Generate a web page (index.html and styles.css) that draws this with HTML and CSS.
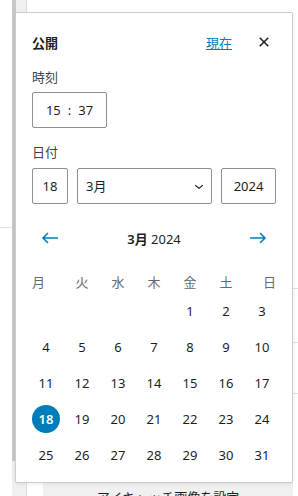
FILE: index.html
```html
<!DOCTYPE html>
<html lang="ja">
<head>
    <meta charset="UTF-8">
    <meta name="viewport" content="width=device-width, initial-scale=1.0">
    <title>公開</title>
    <link rel="stylesheet" href="styles.css">
</head>
<body>
    <div class="page">
        <div class="gutter"><div class="gutter-top"></div></div>
        <div class="scrollbar"><div class="scrollbar-thumb"></div></div>
        <div class="rail"></div>
        <div class="content">
            <div class="panel-row first"></div>
            <div class="panel-row second"></div>
            <div class="panel-row third"></div>
            <div class="spacer"></div>
            <div class="featured">
                <div class="featured-btn">アイキャッチ画像を設定</div>
            </div>
        </div>
    </div>

    <div class="popover">
        <div class="pop-header">
            <span class="pop-title">公開</span>
            <a class="now-link" href="#">現在</a>
            <span class="close-btn">
                <svg width="24" height="24" viewBox="0 0 24 24"><path d="M12 13.06l3.712 3.713 1.061-1.06L13.061 12l3.712-3.712-1.06-1.06L12 10.938 8.288 7.227l-1.061 1.06L10.939 12l-3.712 3.712 1.06 1.061L12 13.061z" fill="#1e1e1e"/></svg>
            </span>
        </div>

        <div class="field-label">時刻</div>
        <div class="time-box">
            <span>15</span><span class="colon">:</span><span>37</span>
        </div>

        <div class="field-label date-label">日付</div>
        <div class="date-row">
            <div class="input day-input">18</div>
            <div class="input month-input">
                <span>3月</span>
                <svg width="18" height="18" viewBox="0 0 24 24"><path d="M17.5 11.6L12 16l-5.5-4.4.9-1.2L12 14l4.6-3.6 1 1.2z" fill="#1e1e1e"/></svg>
            </div>
            <div class="input year-input">2024</div>
        </div>

        <div class="cal-nav">
            <span class="nav-btn">
                <svg width="24" height="24" viewBox="0 0 24 24"><path d="M20 11.2H6.8l3.7-3.7-1-1L3.9 12l5.6 5.5 1-1-3.7-3.7H20z" fill="#007cba"/></svg>
            </span>
            <span class="cal-title"><b>3月</b> 2024</span>
            <span class="nav-btn">
                <svg width="24" height="24" viewBox="0 0 24 24"><path d="M4 11.2h13.2l-3.7-3.7 1-1L20.1 12l-5.6 5.5-1-1 3.7-3.7H4z" fill="#007cba"/></svg>
            </span>
        </div>

        <div class="calendar">
            <div class="weekday first">月</div>
            <div class="weekday">火</div>
            <div class="weekday">水</div>
            <div class="weekday">木</div>
            <div class="weekday">金</div>
            <div class="weekday">土</div>
            <div class="weekday last">日</div>

            <div class="day"></div><div class="day"></div><div class="day"></div><div class="day"></div>
            <div class="day">1</div><div class="day">2</div><div class="day">3</div>
            <div class="day">4</div><div class="day">5</div><div class="day">6</div><div class="day">7</div>
            <div class="day">8</div><div class="day">9</div><div class="day">10</div>
            <div class="day">11</div><div class="day">12</div><div class="day">13</div><div class="day">14</div>
            <div class="day">15</div><div class="day">16</div><div class="day">17</div>
            <div class="day"><span class="selected">18</span></div><div class="day">19</div><div class="day">20</div><div class="day">21</div>
            <div class="day">22</div><div class="day">23</div><div class="day">24</div>
            <div class="day">25</div><div class="day">26</div><div class="day">27</div><div class="day">28</div>
            <div class="day">29</div><div class="day">30</div><div class="day">31</div>
        </div>
    </div>
</body>
</html>
```

FILE: styles.css
```css
* { margin: 0; padding: 0; box-sizing: border-box; }
body {
    font-family: "Noto Sans", "Noto Sans CJK JP", sans-serif;
    font-size: 13px;
    color: #1e1e1e;
    background: #fff;
    width: 298px;
    height: 496px;
    overflow: hidden;
    position: relative;
}

/* underlying editor sidebar */
.page {
    display: flex;
    height: 496px;
}
.gutter {
    width: 12px;
    background: #fff;
}
.gutter-top {
    height: 228px;
    border-bottom: 1px solid #e0e0e0;
}
.scrollbar {
    width: 4px;
    background: #f0f0f0;
}
.scrollbar-thumb {
    height: 461px;
    background: #c8c8c8;
}
.rail {
    width: 11px;
    background: #f0f0f0;
    border-right: 1px solid #dcdcdc;
}
.content {
    flex: 1;
    display: flex;
    flex-direction: column;
    background: #fff;
}
.panel-row { border-bottom: 1px solid #e0e0e0; }
.panel-row.first { height: 289px; }
.panel-row.second { height: 54px; }
.panel-row.third { height: 51px; }
.spacer { flex: 1; }
.featured {
    height: 26px;
    padding-left: 16px;
    display: flex;
}
.featured-btn {
    flex: 1;
    margin-right: 5px;
    background: #f0f0f0;
    text-align: center;
    font-size: 13px;
    line-height: 18px;
    padding-top: 18px;
    color: #1e1e1e;
}

/* publish popover */
.popover {
    position: absolute;
    left: 15px;
    top: 12px;
    width: 278px;
    padding: 16px 16px 9px;
    background: #fff;
    border: 1px solid #ccc;
    border-radius: 2px;
    box-shadow: 0 1px 4px rgba(0,0,0,0.08);
}
.pop-header {
    display: flex;
    align-items: center;
    height: 26px;
}
.pop-title {
    flex: 1;
    font-weight: 600;
}
.now-link {
    color: #007cba;
    text-decoration: underline;
    margin-right: 20px;
}
.close-btn {
    width: 24px;
    height: 24px;
    display: flex;
}
.field-label {
    margin-top: 14px;
    line-height: 16px;
    color: #3c434a;
}
.date-label { margin-top: 16px; }
.time-box {
    margin-top: 7px;
    width: 75px;
    height: 36px;
    border: 1px solid #8c8f94;
    border-radius: 2px;
    display: flex;
    align-items: center;
    justify-content: center;
    line-height: 18px;
}
.colon { margin: 0 7px; }
.date-row {
    margin-top: 8px;
    display: flex;
    gap: 9px;
}
.input {
    height: 36px;
    border: 1px solid #8c8f94;
    border-radius: 2px;
    display: flex;
    align-items: center;
    justify-content: center;
    line-height: 18px;
}
.day-input { width: 36px; }
.month-input {
    width: 135px;
    justify-content: space-between;
    padding: 0 3px 0 8px;
}
.year-input { width: 55px; }
.cal-nav {
    margin-top: 16px;
    height: 36px;
    display: flex;
    align-items: center;
    justify-content: space-between;
}
.nav-btn {
    width: 36px;
    height: 36px;
    display: flex;
    align-items: center;
    justify-content: center;
}
.cal-title b { font-weight: 600; }
.calendar {
    margin: 15px -4px 0;
    display: grid;
    grid-template-columns: repeat(7, 36px);
    grid-template-rows: 22px;
    grid-auto-rows: 36px;
}
.weekday {
    height: 22px;
    text-align: center;
    line-height: 22px;
    color: #646970;
}
.weekday.first { text-align: left; padding-left: 4px; }
.weekday.last { text-align: right; padding-right: 4px; }
.day {
    display: flex;
    align-items: center;
    justify-content: center;
    line-height: 18px;
}
.selected {
    width: 28px;
    height: 28px;
    border-radius: 50%;
    background: #007cba;
    color: #fff;
    font-weight: 600;
    display: flex;
    align-items: center;
    justify-content: center;
}
```
